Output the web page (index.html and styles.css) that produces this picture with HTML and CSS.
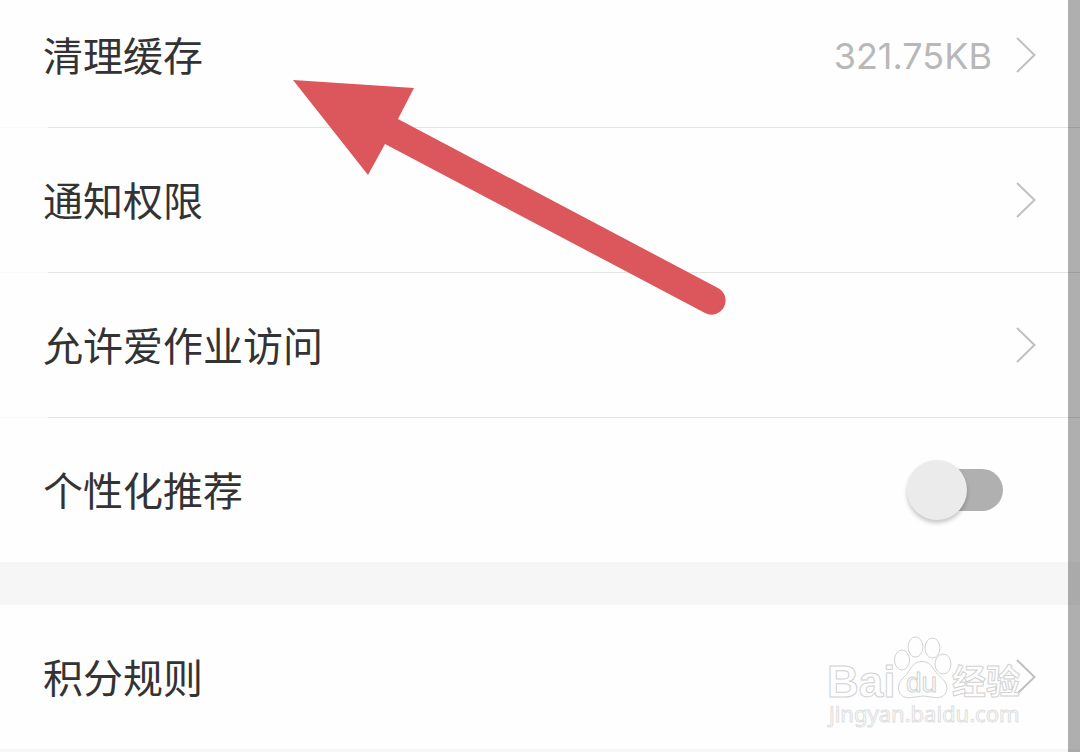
FILE: index.html
```html
<!DOCTYPE html>
<html lang="zh-CN">
<head>
<meta charset="utf-8">
<meta name="viewport" content="width=device-width, initial-scale=1">
<title>设置</title>
<link rel="stylesheet" href="styles.css">
</head>
<body>
<main class="settings">
  <nav class="group group-top">
    <a class="row" href="#cache">
      <span class="label">清理缓存</span>
      <span class="value">321.75KB</span>
      <svg class="chevron" viewBox="0 0 20 36" aria-hidden="true"><path d="M1 1 18.500 18 1 35"/></svg>
    </a>
    <a class="row" href="#notifications">
      <span class="label">通知权限</span>
      <svg class="chevron" viewBox="0 0 20 36" aria-hidden="true"><path d="M1 1 18.500 18 1 35"/></svg>
    </a>
    <a class="row" href="#access">
      <span class="label">允许爱作业访问</span>
      <svg class="chevron" viewBox="0 0 20 36" aria-hidden="true"><path d="M1 1 18.500 18 1 35"/></svg>
    </a>
    <div class="row row-switch">
      <label class="label" for="personal">个性化推荐</label>
      <input class="switch" id="personal" type="checkbox" role="switch">
    </div>
  </nav>
  <nav class="group">
    <a class="row row-end" href="#points">
      <span class="label">积分规则</span>
      <svg class="chevron" viewBox="0 0 20 36" aria-hidden="true"><path d="M1 1 18.500 18 1 35"/></svg>
    </a>
  </nav>
  <svg class="arrow" viewBox="0 0 434 236" aria-hidden="true">
    <path d="M1 0 122 8 106 39 426 208A14 14 0 0 1 413 233L93 64 76 95Z"/>
  </svg>
  <svg class="watermark" viewBox="0 0 200 96" role="img" aria-label="Baidu 经验">
    <text class="wm-bai" x="0" y="62">Bai</text>
    <g class="wm-paw">
      <ellipse cx="75" cy="25" rx="7.500" ry="10"/>
      <ellipse cx="88.500" cy="12" rx="7.500" ry="10"/>
      <ellipse cx="105.500" cy="13" rx="7.500" ry="10"/>
      <ellipse cx="116" cy="29" rx="8" ry="10"/>
      <path d="M95 26.500C102 26.500 105 31 108 36C112 42 120 45 120 54C119 62 112 64 104 62Q96 60 88 62C79 64 72 62 71.500 53C71.500 44 79 42 82 36C85 31 88 26.500 95 26.500Z"/>
    </g>
    <text class="wm-du" x="79" y="57">du</text>
    <text class="wm-cn" x="125" y="59">经验</text>
    <text class="wm-url" x="2" y="87">jingyan.baidu.com</text>
  </svg>
  <div class="scrollbar"></div>
</main>
</body>
</html>
```
FILE: styles.css
```css
* {
  box-sizing: border-box;
}

body {
  margin: 0;
  background: #f6f6f6;
  color: #333;
  font-family: "Noto Sans CJK SC", sans-serif;
}

.settings {
  position: relative;
  min-height: 100vh;
  overflow: hidden;
}

.group {
  background: #fefefe;
}

.group + .group {
  margin-top: 43px;
}

.row {
  display: flex;
  align-items: center;
  gap: 24px;
  padding: 42px 44px 43px 43px;
  color: inherit;
  text-decoration: none;
  background: linear-gradient(to right, #f9f9f9 48px, #e4e4e4 48px) bottom / 100% 1px no-repeat;
}

.group-top .row:first-child {
  padding-top: 25px;
}

.row-switch,
.row-end {
  padding-bottom: 42px;
  background: none;
}

.row-switch {
  padding-right: 77px;
}

.label {
  flex: 1;
  padding-bottom: 2px;
  font-size: 40px;
  line-height: 58px;
}

.value {
  padding-top: 2px;
  color: #b8b8b8;
  font-family: Inter, sans-serif;
  font-size: 36px;
  line-height: 58px;
}

.chevron {
  width: 20px;
  height: 36px;
  fill: none;
  stroke: #c0c0c0;
  stroke-width: 2;
}

.switch {
  appearance: none;
  position: relative;
  display: flex;
  align-items: center;
  justify-content: flex-end;
  width: 96px;
  height: 60px;
  margin: 0;
}

.switch::before {
  content: "";
  width: 86px;
  height: 42px;
  border-radius: 21px;
  background: #b0b0b0;
}

.switch::after {
  content: "";
  position: absolute;
  left: 0;
  width: 60px;
  height: 60px;
  border-radius: 50%;
  background: #ebebeb;
  box-shadow: 0 3px 4px rgba(0, 0, 0, 0.22);
}

.switch:checked::after {
  left: 36px;
}

.arrow {
  position: absolute;
  top: 80px;
  left: 292px;
  width: 434px;
  height: 236px;
  fill: #dc575c;
  pointer-events: none;
}

.watermark {
  position: absolute;
  top: 635px;
  right: 53px;
  width: 200px;
  height: 96px;
  fill: #fefefe;
  stroke: #d2d2d2;
  stroke-width: 1;
  pointer-events: none;
}

.wm-bai {
  font: bold 44px "Liberation Sans", sans-serif;
}

.wm-du {
  font: 28px "Liberation Sans", sans-serif;
}

.wm-cn {
  font: bold 34px "Noto Sans CJK SC", sans-serif;
}

.wm-url {
  font: 22px "Noto Sans", sans-serif;
  stroke: #dedede;
}

.scrollbar {
  position: absolute;
  top: 0;
  right: 0;
  bottom: 0;
  width: 12px;
  background: rgba(0, 0, 0, 0.31);
}
```
